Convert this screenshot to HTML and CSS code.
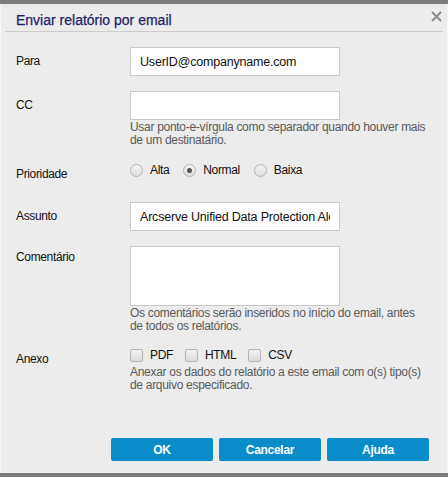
FILE: index.html
```html
<!DOCTYPE html>
<html>
<head>
    <title>Enviar relatório por email</title>
    <link rel="stylesheet" href="styles.css">
</head>
<body>
    <div class="dialog">
        <div class="dialog-header">
            <span class="dialog-title">Enviar relatório por email</span>
            <svg class="close" width="11" height="11" viewBox="0 0 11 11">
                <path d="M1 1 L10 10 M10 1 L1 10" stroke="#8a8a8a" stroke-width="1.8" fill="none"/>
            </svg>
        </div>

        <div class="form">
            <div class="row row-para">
                <label class="label">Para</label>
                <div class="field">
                    <input class="text-input" type="text" value="UserID@companyname.com">
                </div>
            </div>

            <div class="row row-cc">
                <label class="label">CC</label>
                <div class="field">
                    <input class="text-input" type="text" value="">
                    <div class="hint">Usar ponto-e-vírgula como separador quando houver mais<br>de um destinatário.</div>
                </div>
            </div>

            <div class="row row-prio">
                <label class="label label-low">Prioridade</label>
                <div class="field options radios">
                    <label class="option"><span class="radio"></span>Alta</label>
                    <label class="option"><span class="radio checked"></span>Normal</label>
                    <label class="option"><span class="radio"></span>Baixa</label>
                </div>
            </div>

            <div class="row row-subject">
                <label class="label">Assunto</label>
                <div class="field">
                    <input class="text-input" type="text" value="Arcserve Unified Data Protection Alert">
                </div>
            </div>

            <div class="row row-comment">
                <label class="label label-comment">Comentário</label>
                <div class="field">
                    <textarea class="text-area"></textarea>
                    <div class="hint">Os comentários serão inseridos no início do email, antes<br>de todos os relatórios.</div>
                </div>
            </div>

            <div class="row row-attach">
                <label class="label label-low">Anexo</label>
                <div class="field">
                    <div class="options">
                        <label class="option"><span class="check"></span>PDF</label>
                        <label class="option"><span class="check"></span>HTML</label>
                        <label class="option"><span class="check"></span>CSV</label>
                    </div>
                    <div class="hint hint-attach">Anexar os dados do relatório a este email com o(s) tipo(s)<br>de arquivo especificado.</div>
                </div>
            </div>
        </div>

        <div class="buttons">
            <button class="btn">OK</button>
            <button class="btn">Cancelar</button>
            <button class="btn">Ajuda</button>
        </div>
    </div>
</body>
</html>
```
FILE: styles.css
```css
html, body {
    margin: 0;
    padding: 0;
}
body {
    width: 448px;
    height: 477px;
    background: #7b7b7b;
    padding-top: 4px;
    box-sizing: border-box;
    font-family: "Liberation Sans", Arial, sans-serif;
    font-size: 12px;
    letter-spacing: -0.35px;
    color: #111;
    overflow: hidden;
}
.dialog {
    height: 469px;
    box-sizing: border-box;
    background: #ececec;
    border: 1px solid #f6f6f6;
    border-top: none;
    display: flex;
    flex-direction: column;
}
.dialog-header {
    margin: 0 4px;
    height: 27px;
    border-bottom: 1px solid #cbcbcb;
    display: flex;
    align-items: flex-start;
    justify-content: space-between;
}
.dialog-title {
    margin: 8px 0 0 11px;
    font-size: 14px;
    line-height: 16px;
    letter-spacing: 0;
    color: #22226a;
    -webkit-text-stroke: 0.25px #22226a;
}
.close {
    margin: 7px 1px 0 0;
}
.form {
    padding-left: 15px;
}
.row {
    display: grid;
    grid-template-columns: 114px 300px;
    align-items: start;
}
.label {
    line-height: 15px;
    padding-top: 7px;
}
.label-low {
    padding-top: 5px;
}
.label-comment {
    padding-top: 4px;
}
.row-para { margin-top: 15px; }
.row-cc { margin-top: 15px; }
.row-prio { margin-top: 15px; }
.row-subject { margin-top: 20px; }
.row-comment { margin-top: 15px; }
.row-attach { margin-top: 14px; }

.text-input {
    display: block;
    width: 210px;
    height: 29px;
    box-sizing: border-box;
    border: 1px solid #c9c9c9;
    background: #fff;
    padding: 0 9px;
    font-family: "Liberation Sans", Arial, sans-serif;
    font-size: 12.5px;
    letter-spacing: -0.2px;
    color: #111;
    outline: none;
}
.text-area {
    display: block;
    width: 210px;
    height: 60px;
    box-sizing: border-box;
    border: 1px solid #c9c9c9;
    background: #fff;
    resize: none;
    margin: 0;
    outline: none;
}
.hint {
    margin-top: 1px;
    line-height: 13px;
    color: #5a5a5a;
    letter-spacing: -0.3px;
    white-space: nowrap;
}
.hint-attach {
    margin-top: 3px;
}
.options {
    display: flex;
    align-items: center;
    gap: 12px;
    height: 16px;
}
.radios {
    gap: 14px;
}
.option {
    display: flex;
    align-items: center;
    gap: 7px;
    line-height: 16px;
}
.radio {
    width: 11px;
    height: 11px;
    border: 1px solid #b4b4b4;
    border-radius: 50%;
    background: linear-gradient(#f4f4f4, #dedede);
    position: relative;
}
.radio.checked::after {
    content: "";
    position: absolute;
    left: 3px;
    top: 3px;
    width: 5px;
    height: 5px;
    border-radius: 50%;
    background: #555;
}
.check {
    width: 11px;
    height: 11px;
    border: 1px solid #b4b4b4;
    border-radius: 2px;
    background: linear-gradient(#f2f2f2, #dcdcdc);
}
.buttons {
    margin-top: auto;
    padding: 0 18px 11px 0;
    display: flex;
    justify-content: flex-end;
    gap: 6px;
}
.btn {
    width: 102px;
    height: 23px;
    border: none;
    border-radius: 2px;
    background: #0a8ccb;
    color: #fff;
    font-family: "Liberation Sans", Arial, sans-serif;
    font-size: 12px;
    font-weight: bold;
    letter-spacing: -0.3px;
    padding: 0;
}
```
